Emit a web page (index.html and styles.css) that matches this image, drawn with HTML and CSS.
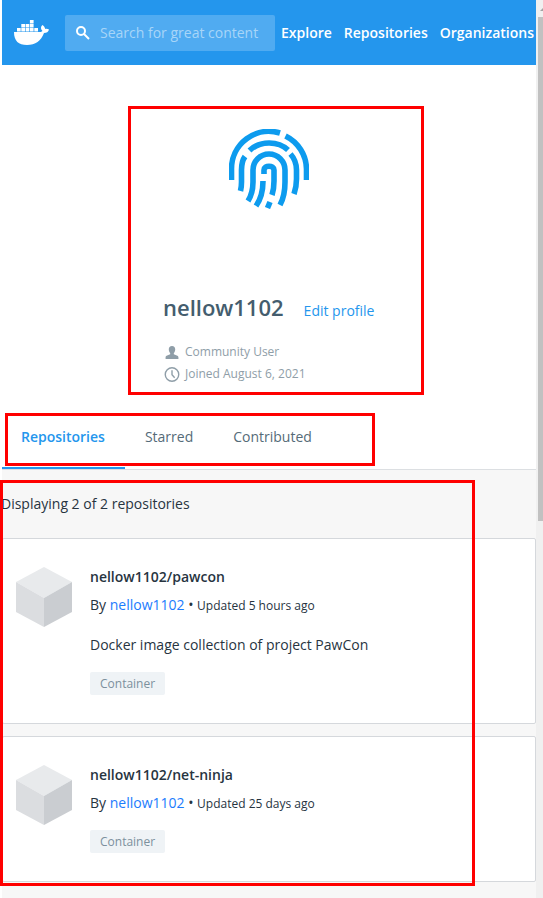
FILE: index.html
```html
<!DOCTYPE html>
<html lang="en">
<head>
<meta charset="utf-8">
<meta name="viewport" content="width=device-width, initial-scale=1">
<title>nellow1102 - Docker Hub</title>
<link rel="stylesheet" href="styles.css">
</head>
<body>
<svg class="sprite" aria-hidden="true">
  <symbol id="cube" viewBox="0 0 56 60">
    <path fill="#e8eaec" d="M28 0 56 15 28 31 0 15Z"/>
    <path fill="#dbdde0" d="M0 15 28 31V60L0 45Z"/>
    <path fill="#cacdd1" d="M56 15 28 31V60L56 45Z"/>
  </symbol>
</svg>
<div class="window">
  <div class="page">
    <header class="topbar">
      <a class="logo" href="#" aria-label="Docker Hub">
        <svg viewBox="0 0 35 25" aria-hidden="true">
          <path d="M0 12H25.500C27 12 28 11.500 28.500 11 26.500 9 26.500 7 28.300 5 30 6 31 7.500 31.200 9 32.500 8.700 34 8.900 35 9.500 34.500 12 32.500 13 30 13 27 21 21.500 25 13 25 4.500 25 0 21 0 12Z"/>
          <path d="M3 8h3.700v3.500H3zM7.300 8H11v3.500H7.300zM11.600 8h3.700v3.500h-3.700zM15.900 8h3.700v3.500h-3.700zM20.300 8H24v3.500h-3.700zM7.300 4H11v3.500H7.300zM11.600 4h3.700v3.500h-3.700zM15.900 4h3.700v3.500h-3.700zM15.900 0h3.700v3.500h-3.700z"/>
        </svg>
      </a>
      <form class="search" role="search">
        <svg viewBox="0 0 14 14" aria-hidden="true"><circle cx="5" cy="5" r="4"/><path d="m8 8 5 5"/></svg>
        <input type="text" aria-label="Search" placeholder="Search for great content">
      </form>
      <nav class="menu">
        <a href="#">Explore</a>
        <a href="#">Repositories</a>
        <a href="#">Organizations</a>
      </nav>
    </header>

    <section class="profile">
      <div class="profile-inner">
        <svg class="avatar" viewBox="10 9 80 80" role="img" aria-label="Avatar">
          <path d="M12.500 60V49A37.500 37.500 0 0 1 61 13"/>
          <path d="M66.500 16A37.500 37.500 0 0 1 87.500 49V60"/>
          <path d="M30.500 30.500C41 20.500 59 20.500 69 30"/>
          <path d="M26 36.500C23.500 40 22.500 45 22.500 50V62Q22.500 67 21.500 71"/>
          <path d="M71.500 34C76 39 77.500 44 77.500 50V59Q77.500 67 75 74"/>
          <path d="M29 81Q34 73 34 62V50A16 16 0 0 1 66 50V62Q66 76 61 85"/>
          <path d="M45 54V50C45 45 55 45 55 50V61Q55 69 53 75"/>
          <path d="M44 61Q44 76 37 86"/>
          <path d="M51 82 48.500 88"/>
        </svg>
        <div class="name-row">
          <h1>nellow1102</h1>
          <a href="#">Edit profile</a>
        </div>
        <ul class="facts">
          <li>
            <svg viewBox="0 0 14 14" aria-hidden="true"><path fill="#8f9ea8" d="M7 1c2 0 3 1.300 3 3.200 0 1.500-.6 2.600-1.300 3.300v1.200L12 10c.8.400 1 .9 1 1.600V13H1v-1.400c0-.7.200-1.200 1-1.600l3.300-1.300V7.500C4.600 6.800 4 5.700 4 4.200 4 2.300 5 1 7 1Z"/></svg>
            Community User
          </li>
          <li>
            <svg viewBox="0 0 14 14" aria-hidden="true"><g fill="none" stroke="#8f9ea8" stroke-width="1.300"><circle cx="7" cy="7" r="6.300"/><path d="M7 3V7.300L9.500 10"/></g></svg>
            Joined August 6, 2021
          </li>
        </ul>
        <div class="mark mark-profile"></div>
      </div>
    </section>

    <nav class="tabs">
      <a class="tab active" href="#">Repositories</a>
      <a class="tab" href="#">Starred</a>
      <a class="tab" href="#">Contributed</a>
      <div class="mark mark-tabs"></div>
    </nav>

    <main class="results">
      <p class="count">Displaying 2 of 2 repositories</p>
      <article class="card">
        <svg class="cube" aria-hidden="true"><use href="#cube"/></svg>
        <div class="info">
          <h2>nellow1102/pawcon</h2>
          <p class="by">By <a href="#">nellow1102</a> • <small>Updated 5 hours ago</small></p>
          <p class="desc">Docker image collection of project PawCon</p>
          <span class="tag">Container</span>
        </div>
      </article>
      <article class="card">
        <svg class="cube" aria-hidden="true"><use href="#cube"/></svg>
        <div class="info">
          <h2>nellow1102/net-ninja</h2>
          <p class="by">By <a href="#">nellow1102</a> • <small>Updated 25 days ago</small></p>
          <span class="tag">Container</span>
        </div>
      </article>
      <div class="mark mark-results"></div>
    </main>
  </div>
  <div class="scrollbar" aria-hidden="true">
    <svg viewBox="0 0 5 17"><path fill="#a3a3a3" d="M2 11 6 7V11Z"/></svg>
    <div class="thumb"></div>
  </div>
</div>
</body>
</html>
```
FILE: styles.css
```css
* { box-sizing: border-box; }

body {
  margin: 0;
  background: #fff;
  color: #27343f;
  font: 14px/20px "Open Sans", sans-serif;
}

a { color: #2496ed; text-decoration: none; }
h1, h2, p, ul { margin: 0; padding: 0; }
.sprite { display: none; }

.window { display: flex; min-height: 100vh; padding-left: 2px; overflow: hidden; }
.page { flex: 1; min-width: 0; display: flex; flex-direction: column; }

.topbar {
  display: flex;
  align-items: center;
  height: 65px;
  padding: 0 2px 0 12px;
  background: #2496ed;
}
.logo { flex: none; margin-right: 16px; }
.logo svg { display: block; width: 35px; height: 25px; fill: #fff; }
.search {
  flex: 1;
  min-width: 0;
  display: flex;
  align-items: center;
  gap: 10px;
  height: 36px;
  padding: 0 11px;
  border-radius: 2px;
  background: #50abf1;
}
.search svg { flex: none; width: 14px; height: 14px; fill: none; stroke: #fff; stroke-width: 2; }
.search input {
  flex: 1;
  min-width: 0;
  padding: 0;
  border: 0;
  outline: 0;
  background: none;
  color: #fff;
  font: inherit;
}
.search input::placeholder { color: #a7d5f8; opacity: 1; }
.menu { display: flex; gap: 12px; margin-left: 6px; }
.menu a { color: #fff; font-weight: 600; }

.profile { display: flex; justify-content: center; padding: 41px 0 18px 14px; }
.profile-inner { position: relative; width: 296px; height: 289px; padding: 23px 35px 0; }
.avatar {
  display: block;
  width: 80px;
  height: 80px;
  margin: 0 0 83px 66px;
  fill: none;
  stroke: #0d9bee;
  stroke-width: 5.6;
}
.name-row { display: flex; align-items: baseline; gap: 20px; }
.name-row h1 { color: #445d6e; font-size: 22px; line-height: 30px; font-weight: 600; }
.facts { margin-top: 19px; color: #8f9ea8; font-size: 12px; line-height: 22px; list-style: none; }
.facts li { display: flex; align-items: center; gap: 4px; }
.facts svg { width: 18px; height: 15px; }

.tabs { position: relative; display: flex; height: 57px; border-bottom: 1px solid #dcdfe2; }
.tab { padding: 14px 20px 0; color: #556b78; }
.tab.active { padding-left: 19px; border-bottom: 2px solid #2496ed; color: #2496ed; font-weight: 600; }

.results { position: relative; flex: 1; padding-bottom: 16px; background: #f7f7f7; }
.count { margin-left: -1px; padding: 24px 0; }
.card {
  display: flex;
  gap: 18px;
  margin-bottom: 12px;
  padding: 28px 13px;
  border: 1px solid #d5d8dc;
  border-radius: 2px;
  background: #fff;
}
.cube { flex: none; width: 56px; height: 60px; }
.info h2 { font-size: 14px; line-height: 20px; font-weight: 600; }
.by { margin-top: 8px; }
.by a { color: #1c7cfd; }
.by small { font-size: 12px; line-height: 1; }
.desc { margin-top: 20px; }
.tag {
  display: block;
  width: fit-content;
  margin-top: 17px;
  padding: 0 10px;
  border-radius: 2px;
  background: #eff3f6;
  color: #7c909d;
  font-size: 12px;
  line-height: 23px;
}

.mark { position: absolute; border: 3px solid #f00; pointer-events: none; }
.mark-profile { inset: 0; }
.mark-tabs { left: 3px; top: 0; width: 370px; height: 53px; }
.mark-results { left: -2px; top: 10px; width: 475px; height: 406px; }

.scrollbar { flex: none; width: 7px; padding-left: 2px; background: #f0f0f0; }
.scrollbar svg { display: block; width: 5px; height: 17px; }
.thumb { height: 504px; background: #c1c1c1; }
```
